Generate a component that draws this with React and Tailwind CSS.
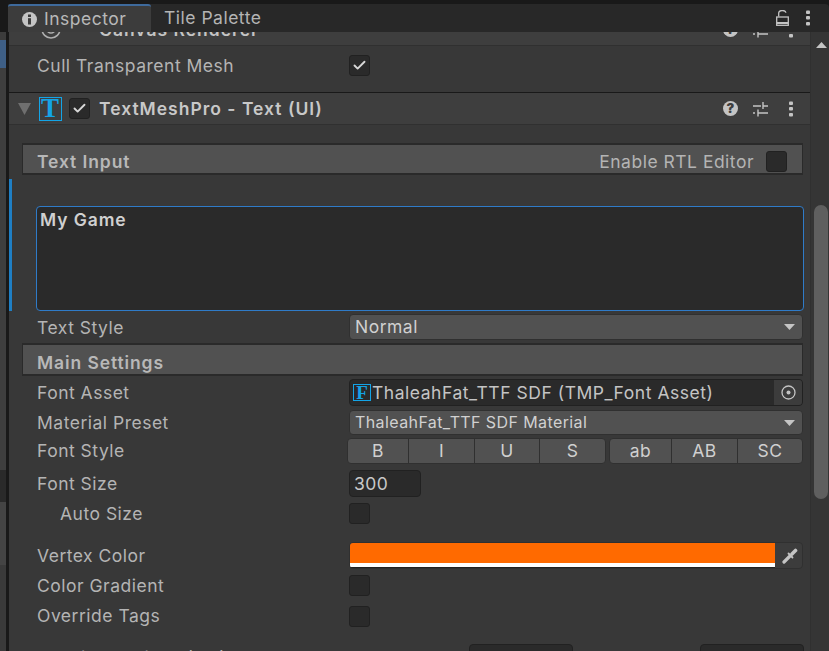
import React from "react";
import { Check } from "lucide-react";

const font = { fontFamily: "Inter, 'Noto Sans', sans-serif" };

function Dots({ className = "" }) {
  return (
    <svg width="4" height="16" viewBox="0 0 4 16" className={className}>
      <rect x="0" y="0.5" width="4" height="3.5" rx="1" fill="#c4c4c4" />
      <rect x="0" y="6" width="4" height="3.5" rx="1" fill="#c4c4c4" />
      <rect x="0" y="12" width="4" height="3.5" rx="1" fill="#c4c4c4" />
    </svg>
  );
}

function Sliders() {
  return (
    <svg width="16" height="16" viewBox="0 0 16 16" stroke="#c4c4c4" strokeWidth="1.4" fill="none">
      <path d="M0 5h8M10 5h5M10 1v7" />
      <path d="M0 12h2M5 12h10M5 8.5v7" />
    </svg>
  );
}

function Help() {
  return (
    <div className="w-[15px] h-[15px] rounded-full bg-[#c4c4c4] text-[#3e3e3e] text-[13px] font-black tracking-normal flex items-center justify-center leading-none">
      ?
    </div>
  );
}

function HeaderIcons() {
  return (
    <div className="flex items-center absolute left-[714px] top-0 h-[31px]">
      <Help />
      <div className="ml-[15px]"><Sliders /></div>
      <Dots className="ml-[20px]" />
    </div>
  );
}

function Checkbox({ checked }) {
  return (
    <div className="w-[21px] h-[21px] rounded-[3px] bg-[#2a2a2a] border border-[#212121] flex items-center justify-center shrink-0">
      {checked && <Check size={15} strokeWidth={3} color="#d8d8d8" />}
    </div>
  );
}

function Select({ text, small, h = "h-[26px]" }) {
  return (
    <div className={`relative flex-1 ${h} rounded-[4px] bg-[#515151] border border-[#303030] pl-[5px] flex items-center text-[#d0d0d0] ${small ? "text-[16px] tracking-[0.4px]" : ""}`}>
      {text}
      <svg width="11" height="6" viewBox="0 0 11 6" className="absolute right-[7px] top-[9px]">
        <path d="M0 0h11L5.5 6z" fill="#c4c4c4" />
      </svg>
    </div>
  );
}

function Section({ title, h, children }) {
  return (
    <div className={`relative ml-[13px] w-[781px] shrink-0 ${h} bg-[#515151] border-y-2 border-x border-[#2a2a2a] flex items-end pl-[14px] text-[#b8b8b8] font-semibold tracking-[0.9px]`}>
      <span className="leading-[22px]">{title}</span>
      {children}
    </div>
  );
}

function StyleGroup({ items, widths }) {
  return (
    <div className="flex h-[26px] rounded-[4px] overflow-hidden border border-[#303030] bg-[#515151]">
      {items.map((t, i) => (
        <div
          key={t}
          className={`flex items-center justify-center text-[#d0d0d0] ${widths[i]} ${i > 0 ? "border-l border-[#303030]" : ""}`}
        >
          {t}
        </div>
      ))}
    </div>
  );
}

export default function App() {
  return (
    <div className="w-[829px] h-[651px] overflow-hidden bg-[#191919] flex text-[17.5px] tracking-[0.5px] leading-none" style={font}>
      {/* sliver of the panel to the left */}
      <div className="w-[6px] shrink-0 flex flex-col pt-[32px] mr-[2px]">
        <div className="h-[8px] shrink-0 bg-[#3c3c3c]" />
        <div className="h-[28px] shrink-0 bg-[#3e5f86]" />
        <div className="h-[402px] shrink-0 bg-[#3e3e3e]" />
        <div className="h-[32px] shrink-0 bg-[#2a2a2a]" />
        <div className="h-[63px] shrink-0 bg-[#444444]" />
        <div className="flex-1 bg-[#3a3a3a]" />
      </div>

      <div className="flex-1 flex flex-col pt-[4px] min-w-0">
        {/* tab bar */}
        <div className="h-[28px] bg-[#282828] rounded-tr-[4px] flex items-stretch shrink-0 relative">
          <div className="w-[143px] bg-[#3c3c3c] border-t-2 border-[#3e6a9c] rounded-t-[3px] flex items-center pl-[14px] text-[#b8b8b8]">
            <svg width="15" height="15" viewBox="0 0 15 15">
              <circle cx="7.5" cy="7.5" r="7.5" fill="#c4c4c4" />
              <rect x="6" y="2.5" width="3" height="2.5" fill="#3c3c3c" />
              <rect x="6" y="6.2" width="3" height="6.3" fill="#3c3c3c" />
            </svg>
            <span className="ml-[7px]">Inspector</span>
          </div>
          <div className="pl-[13px] flex items-center text-[#b4b4b4]">Tile Palette</div>
          <div className="ml-auto flex items-center pr-[19px]">
            <svg width="13" height="16" viewBox="0 0 13 16" fill="none" stroke="#c4c4c4" strokeWidth="1.3">
              <path d="M2.7 6.5V3.2a3.6 2.5 0 0 1 7.2-.4" />
              <rect x="0.7" y="7" width="11.6" height="8.3" />
              <path d="M0.7 13h11.6" strokeWidth="2" />
            </svg>
            <Dots className="ml-[17px]" />
          </div>
        </div>

        <div className="flex-1 flex min-h-0">
          {/* inspector body */}
          <div className="relative w-[802px] shrink-0 bg-[#383838] border-l border-[#191919] flex flex-col overflow-hidden">
            {/* selection bar beside the text area */}
            <div className="absolute left-0 top-[147px] w-[3px] h-[132px] bg-[#1f7fc4]" />

            <div className="h-[14px] shrink-0 overflow-hidden bg-[#3e3e3e] border-b border-[#303030] relative flex items-end">
              <div className="h-[31px] shrink-0 relative w-full flex items-center pl-[90px] font-semibold tracking-[1px] text-[#c4c4c4]">
                <span>Canvas Renderer</span>
                <svg width="22" height="22" viewBox="0 0 22 22" fill="none" stroke="#b0b0b0" strokeWidth="1.6" className="absolute left-[31px] top-[4px]">
                  <circle cx="11" cy="11" r="9" />
                  <circle cx="11" cy="11" r="4" />
                </svg>
                <HeaderIcons />
              </div>
            </div>

            <div className="h-[46px] shrink-0 flex items-center pl-[28px] pb-[7px]">
              <div className="w-[312px] text-[#b4b4b4]">Cull Transparent Mesh</div>
              <Checkbox checked />
            </div>

            <div className="h-[33px] shrink-0 bg-[#3e3e3e] border-t border-[#191919] border-b border-b-[#303030] relative flex items-center text-[#c8c8c8] font-semibold tracking-[1px]">
              <svg width="13" height="12" viewBox="0 0 13 12" className="ml-[9px] shrink-0">
                <path d="M0 0h13L6.5 12z" fill="#6f6f6f" />
              </svg>
              <div className="ml-[8px] w-[23px] h-[24px] border border-[#14a4e6] flex items-center justify-center text-[#14a4e6] text-[27px] font-bold shrink-0" style={{ fontFamily: "'Liberation Serif', serif" }}>
                T
              </div>
              <div className="ml-[7px]"><Checkbox checked /></div>
              <span className="ml-[9px] pt-[1px]">TextMeshPro - Text (UI)</span>
              <HeaderIcons />
            </div>

            <div className="h-[18px] shrink-0" />
            <Section title="Text Input" h="h-[32px]">
              <span className="absolute right-[48px] bottom-0 text-[#b4b4b4] font-normal tracking-[0.5px] leading-[22px]">Enable RTL Editor</span>
              <div className="absolute right-[15px] top-[6px]"><Checkbox /></div>
            </Section>

            <div className="ml-[27px] w-[768px] h-[105px] mt-[31px] rounded-[4px] border border-[#2f7bc8] bg-[#2a2a2a] pl-[3px] pt-[4px] font-semibold tracking-[0.9px] text-[#d0d0d0] shrink-0">
              My Game
            </div>

            <div className="h-[32px] shrink-0 flex items-center pl-[28px] pr-[7px]">
              <div className="w-[312px] shrink-0 pt-[1px] text-[#b4b4b4]">Text Style</div>
              <Select text="Normal" />
            </div>

            <Section title="Main Settings" h="h-[33px]" />

            <div className="h-[32px] shrink-0 flex items-center pl-[28px] pr-[7px]">
              <div className="w-[312px] shrink-0 pt-[2px] text-[#b4b4b4]">Font Asset</div>
              <div className="flex-1 h-[27px] rounded-[4px] bg-[#2a2a2a] border border-[#212121] flex items-center relative overflow-hidden text-[#c4c4c4]">
                <div className="ml-[3px] w-[18px] h-[17px] border border-[#14a4e6] text-[#14a4e6] flex items-center justify-center text-[19px] font-bold tracking-normal shrink-0" style={{ fontFamily: "'Liberation Serif', serif" }}>F</div>
                <span className="ml-[1px] pt-[1px] tracking-[0.53px]">ThaleahFat_TTF SDF (TMP_Font Asset)</span>
                <div className="absolute right-0 inset-y-0 w-[28px] bg-[#3c3c3c] flex items-center justify-center">
                  <svg width="15" height="15" viewBox="0 0 15 15" fill="none" stroke="#c4c4c4" strokeWidth="1.3">
                    <circle cx="7.5" cy="7.5" r="6.5" />
                    <circle cx="7.5" cy="7.5" r="2" fill="#c4c4c4" stroke="none" />
                  </svg>
                </div>
              </div>
            </div>

            <div className="h-[28px] shrink-0 flex items-center pl-[28px] pr-[7px]">
              <div className="w-[312px] shrink-0 pt-[2px] text-[#b4b4b4]">Material Preset</div>
              <Select text="ThaleahFat_TTF SDF Material" small h="h-[25px]" />
            </div>

            <div className="h-[29px] shrink-0 flex items-center pl-[28px] pr-[7px]">
              <div className="w-[310px] shrink-0 text-[#b4b4b4]">Font Style</div>
              <div className="flex gap-[3px]">
                <StyleGroup items={["B", "I", "U", "S"]} widths={["w-[60px]", "w-[66px]", "w-[65px]", "w-[66px]"]} />
                <StyleGroup items={["ab", "AB", "SC"]} widths={["w-[61px]", "w-[66px]", "w-[65px]"]} />
              </div>
            </div>

            <div className="h-[37px] shrink-0 flex items-center pl-[28px]">
              <div className="w-[312px] shrink-0 text-[#b4b4b4]">Font Size</div>
              <div className="w-[72px] h-[27px] rounded-[4px] bg-[#2a2a2a] border border-[#212121] flex items-center pl-[4px] text-[#c8c8c8]">300</div>
            </div>

            <div className="h-[22px] shrink-0 flex items-center pl-[28px]">
              <div className="w-[312px] shrink-0 pl-[23px] pt-[2px] text-[#b4b4b4]">Auto Size</div>
              <Checkbox />
            </div>

            <div className="h-[27px] mt-[18px] shrink-0 flex items-center pl-[28px] pr-[7px]">
              <div className="w-[312px] shrink-0 text-[#b4b4b4]">Vertex Color</div>
              <div className="flex-1 h-[27px] rounded-[4px] border border-[#303030] flex overflow-hidden bg-[#3c3c3c]">
                <div className="flex-1 flex flex-col border-b border-[#212121]">
                  <div className="h-[20px] bg-[#ff6a00]" />
                  <div className="flex-1 bg-white" />
                </div>
                <div className="w-[27px] pl-[2px] flex items-center justify-center">
                  <svg width="16" height="16" viewBox="0 0 16 16" fill="none" stroke="#c4c4c4" strokeLinecap="round">
                    <path d="M2 14L7.5 8.5" strokeWidth="3.2" />
                    <path d="M6.5 5.5L10.5 9.5" strokeWidth="1.8" />
                    <path d="M10 6L13.5 2.5" strokeWidth="3.6" />
                  </svg>
                </div>
              </div>
            </div>

            <div className="h-[32px] shrink-0 flex items-center pl-[28px]">
              <div className="w-[312px] shrink-0 pt-[2px] text-[#b4b4b4]">Color Gradient</div>
              <Checkbox />
            </div>
            <div className="h-[30px] shrink-0 flex items-center pl-[28px]">
              <div className="w-[312px] shrink-0 text-[#b4b4b4]">Override Tags</div>
              <Checkbox />
            </div>

            <div className="h-[27px] mt-[13px] shrink-0 flex items-center pl-[28px] text-[#b4b4b4]">
              <div className="w-[313px] shrink-0">Spacing Options (em)</div>
              <div className="w-[119px] shrink-0">Character</div>
              <div className="w-[104px] h-[27px] shrink-0 rounded-[4px] bg-[#2a2a2a] border border-[#212121] pl-[4px] flex items-center text-[#c8c8c8]">0</div>
              <div className="w-[127px] shrink-0 pl-[6px]">Word</div>
              <div className="w-[104px] h-[27px] shrink-0 rounded-[4px] bg-[#2a2a2a] border border-[#212121] pl-[4px] flex items-center text-[#c8c8c8]">0</div>
            </div>
          </div>

          {/* scrollbar */}
          <div className="w-[19px] shrink-0 bg-[#353535] border-l border-[#303030] pl-[2px] flex flex-col items-center">
            <svg width="11" height="6" viewBox="0 0 11 6" className="mt-[10px] shrink-0">
              <path d="M5.5 0L11 6H0z" fill="#c4c4c4" />
            </svg>
            <div className="w-[14px] h-[294px] mt-[157px] rounded-full bg-[#5f5f5f] shrink-0" />
          </div>
        </div>
      </div>
    </div>
  );
}
